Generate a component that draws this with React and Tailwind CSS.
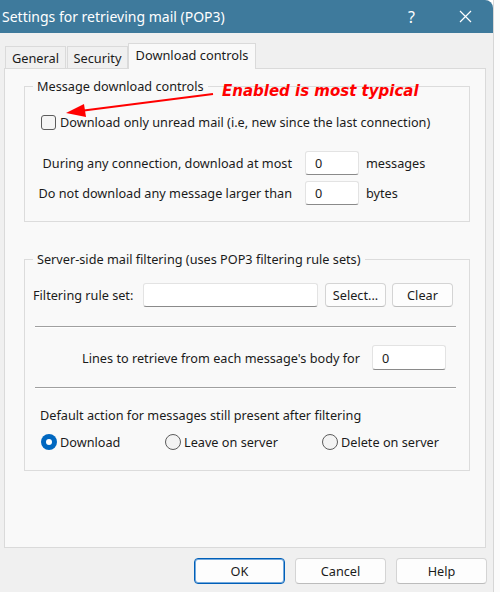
import React from "react";

const Field = ({ className = "", value = "" }) => (
  <div
    className={`h-[24px] bg-white border border-[#e3e3e3] border-b-[#8a8a8a] rounded-[3px] pl-[9px] flex items-center ${className}`}
  >
    {value}
  </div>
);

const Btn = ({ className = "", children }) => (
  <div
    className={`h-[24px] bg-[#fdfdfd] border border-[#d4d4d4] border-b-[#bcbcbc] rounded-[4px] flex items-center justify-center ${className}`}
  >
    {children}
  </div>
);

const Radio = ({ checked, label, className = "" }) => (
  <div className={`flex items-center ${className}`}>
    {checked ? (
      <span className="w-[16px] h-[16px] rounded-full bg-[#0067c0] flex items-center justify-center">
        <span className="w-[6px] h-[6px] rounded-full bg-white" />
      </span>
    ) : (
      <span className="w-[16px] h-[16px] rounded-full border border-[#5c5c5c] bg-[#f3f3f3]" />
    )}
    <span className="ml-[3px]">{label}</span>
  </div>
);

const Separator = () => (
  <div className="ml-[10px] w-[421px] h-[2px] border-t border-[#a0a0a0] border-b border-b-white" />
);

export default function App() {
  return (
    <div className="relative w-[500px] h-[592px] flex bg-white overflow-hidden font-['Noto_Sans',sans-serif] text-[12.7px] leading-[16px] text-[#1b1b1b]">
      {/* dialog window */}
      <div className="w-[493px] flex flex-col">
        {/* title bar */}
        <div className="h-[33px] bg-[#3e7a9c] rounded-tr-[8px] flex items-center text-white">
          <span className="pl-[2px] text-[14px]">Settings for retrieving mail (POP3)</span>
          <span className="ml-auto mr-[44px] text-[16px]">?</span>
          <svg width="13" height="13" viewBox="0 0 13 13" className="mr-[21px]">
            <path d="M1 1 L12 12 M12 1 L1 12" stroke="white" strokeWidth="1.2" />
          </svg>
        </div>

        {/* body */}
        <div className="flex-1 bg-[#f0f0f0] flex flex-col">
          {/* tabs */}
          <div className="pt-[10px] pl-[5px] flex items-end h-[35px] text-[12.8px]">
            <div className="w-[61px] h-[22px] bg-[#f0f0f0] border border-b-0 border-[#dadada] flex items-center justify-center">
              General
            </div>
            <div className="ml-px w-[61px] h-[22px] bg-[#f0f0f0] border border-b-0 border-[#dadada] flex items-center justify-center">
              Security
            </div>
            <div className="relative z-10 -mb-px w-[128px] h-[26px] bg-[#f9f9f9] border border-b-0 border-[#dadada] flex items-center justify-center pb-[3px]">
              Download controls
            </div>
          </div>

          {/* tab panel */}
          <div className="ml-[4px] w-[482px] h-[480px] bg-[#f9f9f9] border border-[#dadada] flex flex-col">
            {/* group 1 */}
            <fieldset className="ml-[19px] mt-[9px] w-[446px] border border-[#dcdcdc] pb-[16px]">
              <legend className="ml-[8px] px-[4px]">Message download controls</legend>
              <div className="mt-[20px] pl-[16px] flex items-center h-[16px]">
                <span className="w-[15px] h-[15px] rounded-[3px] border border-[#5c5c5c] bg-[#f5f5f5]" />
                <span className="ml-[4px]">
                  Download only unread mail (i.e, new since the last connection)
                </span>
              </div>
              <div className="mt-[21px] flex items-center">
                <span className="w-[267px] text-right">During any connection, download at most</span>
                <Field className="ml-[13px] w-[54px]" value="0" />
                <span className="ml-[7px]">messages</span>
              </div>
              <div className="mt-[6px] flex items-center">
                <span className="w-[267px] text-right">Do not download any message larger than</span>
                <Field className="ml-[13px] w-[54px]" value="0" />
                <span className="ml-[7px]">bytes</span>
              </div>
            </fieldset>

            {/* group 2 */}
            <fieldset className="ml-[19px] mt-[29px] w-[446px] border border-[#dcdcdc] pb-[20px]">
              <legend className="ml-[8px] px-[4px]">
                Server-side mail filtering (uses POP3 filtering rule sets)
              </legend>
              <div className="mt-[15px] flex items-center">
                <span className="w-[118px] pl-[8px]">Filtering rule set:</span>
                <Field className="w-[175px]" />
                <Btn className="ml-[7px] w-[61px] mt-px">Select...</Btn>
                <Btn className="ml-[6px] w-[61px] mt-px">Clear</Btn>
              </div>
              <div className="mt-[19px]">
                <Separator />
              </div>
              <div className="mt-[17px] flex items-center">
                <span className="w-[335px] text-right">Lines to retrieve from each message's body for</span>
                <Field className="ml-[12px] w-[74px] h-[25px]" value="0" />
              </div>
              <div className="mt-[17px]">
                <Separator />
              </div>
              <div className="mt-[18px] pl-[15px]">
                Default action for messages still present after filtering
              </div>
              <div className="mt-[11px] pl-[16px] flex items-center">
                <Radio checked label="Download" className="w-[124px]" />
                <Radio label="Leave on server" className="w-[157px]" />
                <Radio label="Delete on server" />
              </div>
            </fieldset>
          </div>

          {/* dialog buttons */}
          <div className="mt-[10px] pr-[6px] flex justify-end gap-[10px]">
            <div className="w-[91px] h-[26px] bg-[#fdfdfd] border border-[#005fb8] shadow-[inset_0_0_0_1px_#74a9dc] rounded-[4px] flex items-center justify-center">
              OK
            </div>
            <Btn className="w-[91px] h-[26px]">Cancel</Btn>
            <Btn className="w-[91px] h-[26px]">Help</Btn>
          </div>
        </div>
      </div>

      {/* edge of the window behind */}
      <div className="w-[7px] bg-[#fbfbfb] border-l border-[#d6d6d6]" />

      {/* annotation overlay */}
      <div className="absolute left-[222px] top-[81px] text-[#ff0000] font-['DejaVu_Sans',sans-serif] font-bold italic text-[15px] leading-[20px]">
        Enabled is most typical
      </div>
      <svg className="absolute left-0 top-0" width="500" height="592" viewBox="0 0 500 592">
        <line x1="213" y1="94" x2="80" y2="111" stroke="#ff0000" strokeWidth="2" />
        <polygon points="66,113 84,104 86,117" fill="#ff0000" />
      </svg>
    </div>
  );
}
